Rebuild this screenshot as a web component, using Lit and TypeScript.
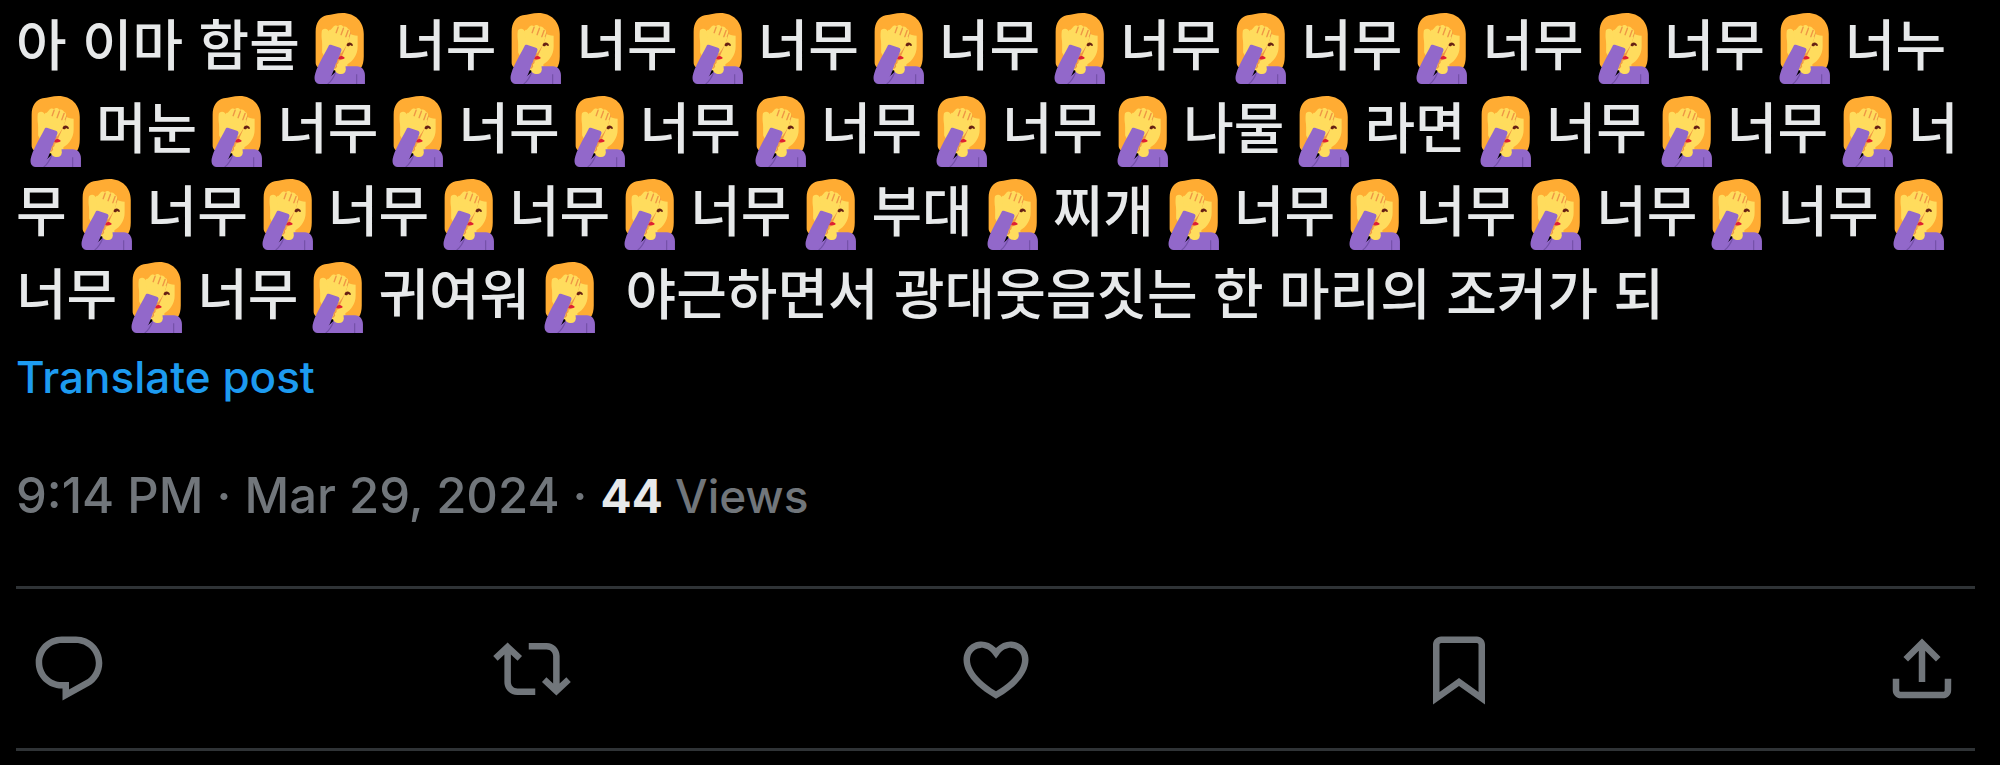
import { LitElement, html, css, svg } from "lit";
import { customElement } from "lit/decorators.js";

// Each entry is the text between two facepalm emoji; "|" marks an optional line break.
const POST = (
  "아 이마 함몰* 너무*너무*너무*너무*너무*너무*너무*너무*너누" +
  "*머눈*너무*너무*너무*너무*너무*나물*라면*너무*너무*너|" +
  "무*너무*너무*너무*너무*부대*찌개*너무*너무*너무*너무*" +
  "너무*너무*귀여워* 야근하면서 광대웃음짓는 한 마리의 조커가 되"
).split("*");

const ACTIONS = [
  {
    label: "Reply",
    path: "M1.751 10c0-4.42 3.584-8 8.005-8h4.366c4.49 0 8.129 3.64 8.129 8.13 0 2.96-1.607 5.68-4.196 7.11l-8.054 4.46v-3.69h-.067c-4.49.1-8.183-3.51-8.183-8.01zm8.005-6c-3.317 0-6.005 2.69-6.005 6 0 3.37 2.77 6.08 6.138 6.01l.351-.01h1.761v2.3l5.087-2.81c1.951-1.08 3.163-3.13 3.163-5.36 0-3.39-2.744-6.13-6.129-6.13H9.756z",
  },
  {
    label: "Repost",
    path: "M4.5 3.88l4.432 4.14-1.364 1.46L5.5 7.55V16c0 1.1.896 2 2 2H13v2H7.5c-2.209 0-4-1.79-4-4V7.55L1.432 9.48.068 8.02 4.5 3.88zM16.5 6H11V4h5.5c2.209 0 4 1.79 4 4v8.45l2.068-1.93 1.364 1.46-4.432 4.14-4.432-4.14 1.364-1.46 2.068 1.93V8c0-1.1-.896-2-2-2z",
  },
  {
    label: "Like",
    path: "M16.697 5.5c-1.222-.06-2.679.51-3.89 2.16l-.805 1.09-.806-1.09C9.984 6.01 8.526 5.44 7.304 5.5c-1.243.07-2.349.78-2.91 1.91-.552 1.12-.633 2.78.479 4.82 1.074 1.97 3.257 4.27 7.129 6.61 3.87-2.34 6.052-4.64 7.126-6.61 1.111-2.04 1.03-3.7.477-4.82-.561-1.13-1.666-1.84-2.908-1.91zm4.187 7.69c-1.351 2.48-4.001 5.12-8.379 7.67l-.503.3-.504-.3c-4.379-2.55-7.029-5.19-8.382-7.67-1.36-2.5-1.41-4.86-.514-6.67.887-1.79 2.647-2.91 4.601-3.01 1.651-.09 3.368.56 4.798 2.01 1.429-1.45 3.146-2.1 4.796-2.01 1.954.1 3.714 1.22 4.601 3.01.896 1.81.846 4.17-.514 6.67z",
  },
  {
    label: "Bookmark",
    path: "M4 4.5C4 3.12 5.119 2 6.5 2h11C18.881 2 20 3.12 20 4.5v18.44l-8-5.71-8 5.71V4.5zM6.5 4c-.276 0-.5.22-.5.5v14.56l6-4.29 6 4.29V4.5c0-.28-.224-.5-.5-.5h-11z",
  },
  {
    label: "Share post",
    path: "M12 2.59l5.7 5.7-1.41 1.42L13 6.41V16h-2V6.41l-3.3 3.3-1.41-1.42L12 2.59zM21 15l-.02 3.51c0 1.38-1.12 2.49-2.5 2.49H5.5C4.11 21 3 19.88 3 18.5V15h2v3.5c0 .28.22.5.5.5h12.98c.28 0 .5-.22.5-.5L19 15h2z",
  },
];

// Woman facepalming: hair, face, shoulder, raised hand and sleeve.
const facepalmArt = svg`
  <path fill="#FFAC33" d="M5.9 25V9.500C5.9 5 8 2 11.500 1.200C14 1 16.500 0 19.500 0C26 0 30.300 4.500 30.300 10.500V22C30.300 24.500 29.800 26.500 28.800 28H9C7 28 5.900 27 5.900 25z"/>
  <path fill="#FFDC5D" d="M9.200 12C10.500 11.500 12 10 13 8.500L23 10C24 11.200 25.500 11.500 27.200 11.500V17C27.200 21 25 24.300 22 26V29H14L9.200 20z"/>
  <path fill="#9268CA" d="M6 36C12 36 15 29 21 27H26.800C29.300 27 30.900 29 30.900 31.500V36z"/>
  <path fill="#7450A8" d="M26.400 31h.6v5h-.6z"/>
  <path fill="#EF9645" d="M22.800 9.200L23.800 10.200C22.800 13.800 21.300 17.500 19.600 21L18.200 24.500L16 27.500L17.500 20z"/>
  <path fill="#FFDC5D" d="M9 9.300C9 8 11 7.400 12 8.500L14.700 12H23.100C22.300 15.300 20.800 18 18.800 20.500L10.500 17.500C9 15.500 8.700 12.500 9 9.300z"/>
  <path fill="#FFDC5D" d="M12.600 9.500L14.700 7.200C15.200 6.200 16.600 6 17.200 6.700C18 5.700 19.400 6 19.900 7C20.800 6.500 22 7 22.300 8C23.400 8.300 23.600 9.500 23.200 10.500L21.700 14.500L13 14z"/>
  <path fill="none" stroke="#EF9645" stroke-width=".7" stroke-linecap="round" d="M17.300 7.200L16.300 10M20 7.700L18.800 11M22.400 8.800L21.200 12"/>
  <path fill="#662113" d="M21.600 16.400C21.800 15 23.200 14.600 24.300 15.500C24.700 15.900 24.900 16.300 24.700 16.600C24.400 16.900 23.900 16.200 23.300 16.300C22.800 17 21.900 17.200 21.600 16.400z"/>
  <path fill="#DF1F32" d="M17.300 23.200C17.700 21.800 19.200 21.200 20.700 22.800C20.300 23.500 18.500 23.800 17.300 23.200z"/>
  <path fill="#9268CA" d="M12.400 16.800C12.700 16.100 13.300 16 14 16.200L18.200 17.600C19 17.900 19.200 18.600 18.900 19.300L14.600 30.200C13.500 33 12 36 9.500 36H8C6 36 5.100 34.300 5.400 32C6 28 9.500 22.500 12.400 16.800z"/>
  <path fill="none" stroke="#7450A8" stroke-width=".6" d="M16.300 29.500C15 32.800 13.800 34.800 12 36"/>
  <path fill="#FFDC5D" d="M17.300 24L20.800 24.500L21.200 28.500C21.200 30 20.300 30.900 18.800 30.900C17 30.900 15.600 30 15.800 28.500z"/>
  <path fill="none" stroke="#EF9645" stroke-width=".6" stroke-linecap="round" d="M17.300 23.800L17.200 25.200L16.300 26L16.500 27.200L15.700 28"/>
`;

@customElement("face-palm")
export class FacePalm extends LitElement {
  static styles = css`
    :host {
      display: inline;
    }
    .emoji {
      width: 71px;
      height: 71px;
      margin: -8px 5px -8px 4px;
      vertical-align: -11px;
    }
  `;

  render() {
    return html`<svg class="emoji" viewBox="0 0 36 36" role="img" aria-label="🤦‍♀️">${facepalmArt}</svg>`;
  }
}

@customElement("app-root")
export class AppRoot extends LitElement {
  static styles = css`
    :host {
      display: block;
      box-sizing: border-box;
      min-height: 100vh;
      padding: 0 25px 0 16px;
      background: #000;
      color: #e7e9ea;
      font-family: Inter, "Noto Sans CJK KR", sans-serif;
      font-weight: 500;
    }
    .text {
      margin: 0;
      font-family: "Noto Sans CJK KR", sans-serif;
      font-size: 55px;
      line-height: 83px;
    }
    .translate {
      display: block;
      margin: 10px 0 0;
      padding: 0;
      border: 0;
      background: none;
      color: #1d9bf0;
      font: inherit;
      font-size: 44px;
      line-height: 70px;
      cursor: pointer;
    }
    .meta {
      margin: 49px 0 55px;
      color: #71767b;
      font-size: 49px;
      line-height: 70px;
    }
    .meta a {
      color: inherit;
      text-decoration: none;
    }
    .meta .views {
      font-size: 46px;
    }
    .count {
      color: #e7e9ea;
      font-weight: 700;
    }
    .actions {
      display: flex;
      justify-content: space-between;
      padding: 41px 14px 40px;
      border: solid #2f3336;
      border-width: 3px 0;
    }
    .action {
      display: block;
      padding: 0;
      border: 0;
      background: none;
      color: #71767b;
      cursor: pointer;
    }
    .icon {
      display: block;
      width: 78px;
      height: 78px;
      fill: currentColor;
    }
  `;

  private renderPart(part: string) {
    return part.split("|").map((piece, i) => (i ? html`<wbr />${piece}` : piece));
  }

  render() {
    return html`
      <article>
        <p class="text" lang="ko">${POST.map((part, i) => (i ? html`<face-palm></face-palm>${this.renderPart(part)}` : part))}</p>
        <button class="translate" type="button">Translate post</button>
        <div class="meta">
          <a href="#post"><time datetime="2024-03-29T21:14">9:14 PM · Mar 29, 2024</time></a>
          · <a class="views" href="#views"><span class="count">44</span> Views</a>
        </div>
        <div class="actions" role="group" aria-label="Post actions">
          ${ACTIONS.map(
            (a) => html`<button class="action" type="button" aria-label=${a.label}>
              <svg class="icon" viewBox="0 0 24 24" aria-hidden="true"><path d=${a.path}></path></svg>
            </button>`
          )}
        </div>
      </article>
    `;
  }
}
